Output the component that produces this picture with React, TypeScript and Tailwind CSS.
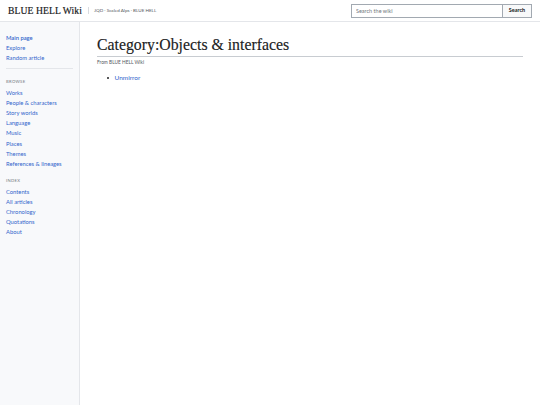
const nav1 = ['Main page', 'Explore', 'Random article'];
const browse = [
  'Works',
  'People & characters',
  'Story worlds',
  'Language',
  'Music',
  'Places',
  'Themes',
  'References & lineages',
];
const index = ['Contents', 'All articles', 'Chronology', 'Quotations', 'About'];

function NavLink({ label, bold }: { label: string; bold?: boolean }) {
  return (
    <a
      href="#"
      className={
        bold
          ? 'block h-[10.2px] leading-[10.2px] text-[#36c] font-semibold'
          : 'block h-[10.2px] leading-[10.2px] text-[#36c]'
      }
    >
      {label}
    </a>
  );
}

export default function App() {
  return (
    <div className="flex h-[405px] w-[540px] flex-col bg-white font-['Lato',sans-serif] text-[#202122]">
      {/* Header */}
      <header className="flex h-[22px] shrink-0 items-center border-b border-[#e4e6ea] pl-[8px] pr-[8px]">
        <span className="font-['Liberation_Serif',serif] text-[9.6px] leading-none tracking-[0.1px] text-[#202122] [-webkit-text-stroke:0.2px_#202122]">
          BLUE HELL Wiki
        </span>
        <span className="ml-[6px] mr-[5px] h-[7px] w-px bg-[#d8dbe0]" />
        <span className="text-[4.6px] text-[#54595d]">JQD · Scaled Alps · BLUE HELL</span>
        <div className="ml-auto flex h-[14px]">
          <input
            placeholder="Search the wiki"
            className="h-[14px] w-[152px] border border-[#a2a9b1] px-[4px] text-[5.5px] placeholder:text-[#72777d] outline-none"
          />
          <button className="h-[14px] w-[29px] border border-l-0 border-[#a2a9b1] bg-[#f8f9fa] text-[5.5px] font-bold text-[#202122]">
            Search
          </button>
        </div>
      </header>

      <div className="flex flex-1">
        {/* Sidebar */}
        <aside className="w-[80px] shrink-0 border-r border-[#e4e6ea] bg-[#f8f9fb] px-[6px] pt-[11px] text-[5.8px]">
          {nav1.map((l, i) => (
            <NavLink key={l} label={l} bold={i === 0} />
          ))}
          <div className="mt-[4.5px] mb-[7.5px] border-t border-[#e4e6ea]" />
          <div className="mb-[1px] h-[10px] leading-[10px] text-[4.2px] tracking-[0.3px] text-[#72777d]">BROWSE</div>
          {browse.map((l) => (
            <NavLink key={l} label={l} />
          ))}
          <div className="mt-[6.5px] mb-[1px] h-[10px] leading-[10px] text-[4.2px] tracking-[0.3px] text-[#72777d]">INDEX</div>
          {index.map((l) => (
            <NavLink key={l} label={l} />
          ))}
        </aside>

        {/* Content */}
        <main className="flex-1 pl-[17px] pr-[17px] pt-[14px]">
          <h1 className="border-b border-[#c8ccd1] pb-[2px] font-['Liberation_Serif',serif] text-[15.8px] leading-[18px] text-[#202122] [-webkit-text-stroke:0.15px_#202122]">
            Category:Objects &amp; interfaces
          </h1>
          <div className="mt-[2px] text-[4.8px] text-[#54595d]">From BLUE HELL Wiki</div>
          <ul className="mt-[7px] pl-[10px] text-[6.5px]">
            <li className="flex items-center">
              <span className="mr-[5.5px] h-[2px] w-[2px] rounded-full bg-[#202122]" />
              <a href="#" className="text-[#36c]">
                Unmirror
              </a>
            </li>
          </ul>
        </main>
      </div>
    </div>
  );
}
